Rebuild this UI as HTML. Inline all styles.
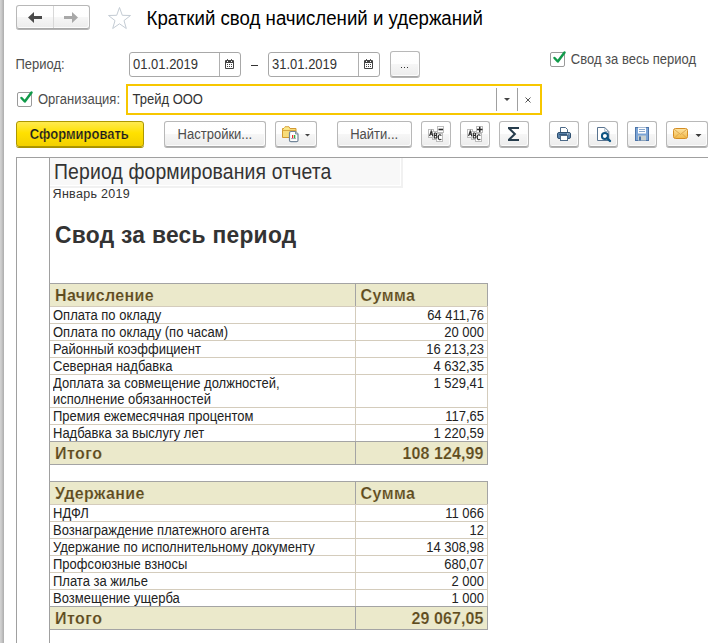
<!DOCTYPE html>
<html><head><meta charset="utf-8"><title>Краткий свод начислений и удержаний</title>
<style>
html,body{margin:0;padding:0;background:#fff;}
body{width:708px;height:643px;position:relative;overflow:hidden;font-family:"Liberation Sans",sans-serif;}
.a{position:absolute;}
.t{position:absolute;white-space:nowrap;font-family:"Liberation Sans",sans-serif;}
.btn{position:absolute;border:1px solid #b8b8b8;border-bottom-color:#a8a8a8;border-radius:3px;background:linear-gradient(#ffffff 0%,#fefefe 50%,#f6f6f6 52%,#ececec 100%);box-shadow:0 1px 0 #b4b4b4,inset -1px -1px 0 #fcfcfc;}
.ybtn{border:1px solid #ad9800;border-radius:3px;background:linear-gradient(#ffea50 0%,#ffe100 45%,#f3d000 100%);box-shadow:0 1px 0 #a89000;}
.fld{position:absolute;border:1px solid #a8a8a8;border-radius:3px;background:#fff;}
.cb{position:absolute;width:13px;height:13px;border:1px solid #9a9a9a;border-radius:2px;background:#fff;}
</style></head><body>
<div class="a" style="left:0px;top:0px;width:4px;height:643px;background:linear-gradient(90deg,#d4d4d4,#c8c8c8 40%,#b4b4b4 80%,#b0b0b0)"></div>
<div class="btn" style="left:16px;top:5px;width:72px;height:22px;"></div>
<div class="a" style="left:53px;top:6px;width:1px;height:22px;background:#d8d8d8"></div>
<svg class="a" style="left:16px;top:5px" width="74" height="24" viewBox="0 0 74 24">
<path d="M12 12.5 L18 7 L18 11 L26 11 L26 14 L18 14 L18 18 Z" fill="#4a4a4a"/>
<path d="M62 12.5 L56 7 L56 11 L48 11 L48 14 L56 14 L56 18 Z" fill="#a8a8a8"/>
</svg>
<svg class="a" style="left:107px;top:6px" width="25" height="24" viewBox="0 0 25 24">
<path d="M12.5 1.5 L15.3 9.3 L23.5 9.5 L17 14.6 L19.3 22.5 L12.5 17.8 L5.7 22.5 L8 14.6 L1.5 9.5 L9.7 9.3 Z" fill="none" stroke="#c4ccd4" stroke-width="1"/>
</svg>
<div class="t" style="left:146.60px;top:9.50px;font-size:18.67px;line-height:18.67px;color:#000;font-weight:normal;letter-spacing:0px;transform:scaleY(1.07);transform-origin:0 15.80px;">Краткий свод начислений и удержаний</div>
<div class="t" style="left:15.50px;top:57.90px;font-size:13px;line-height:13px;color:#4d4d4d;font-weight:normal;letter-spacing:0px;transform:scaleY(1.075);transform-origin:0 11.00px;">Период:</div>
<div class="fld" style="left:129px;top:52px;width:110px;height:23px;"></div>
<div class="a" style="left:219px;top:53px;width:1px;height:23px;background:#b0b0b0"></div>
<div class="t" style="left:133.00px;top:57.90px;font-size:13px;line-height:13px;color:#333;font-weight:normal;letter-spacing:0px;transform:scaleY(1.075);transform-origin:0 11.00px;">01.01.2019</div>
<svg class="a" style="left:225px;top:59px" width="9" height="10" viewBox="0 0 9 10">
<rect x="0" y="1" width="9" height="9" rx="1" fill="#444"/>
<rect x="1" y="4" width="7" height="5" fill="#fff"/>
<rect x="2" y="2" width="1" height="1" fill="#fff"/><rect x="6" y="2" width="1" height="1" fill="#fff"/>
<rect x="2" y="0" width="1" height="1.5" fill="#555"/><rect x="6" y="0" width="1" height="1.5" fill="#555"/>
<rect x="2" y="5" width="1" height="1" fill="#444"/><rect x="4" y="5" width="1" height="1" fill="#444"/><rect x="6" y="5" width="1" height="1" fill="#444"/>
<rect x="2" y="7" width="1" height="1" fill="#444"/><rect x="4" y="7" width="1" height="1" fill="#444"/><rect x="6" y="7" width="1" height="1" fill="#444"/>
</svg>
<div class="a" style="left:251px;top:65px;width:7px;height:1px;background:#333"></div>
<div class="fld" style="left:268px;top:52px;width:110px;height:23px;"></div>
<div class="a" style="left:358px;top:53px;width:1px;height:23px;background:#b0b0b0"></div>
<div class="t" style="left:272.00px;top:57.90px;font-size:13px;line-height:13px;color:#333;font-weight:normal;letter-spacing:0px;transform:scaleY(1.075);transform-origin:0 11.00px;">31.01.2019</div>
<svg class="a" style="left:364px;top:59px" width="9" height="10" viewBox="0 0 9 10">
<rect x="0" y="1" width="9" height="9" rx="1" fill="#444"/>
<rect x="1" y="4" width="7" height="5" fill="#fff"/>
<rect x="2" y="2" width="1" height="1" fill="#fff"/><rect x="6" y="2" width="1" height="1" fill="#fff"/>
<rect x="2" y="0" width="1" height="1.5" fill="#555"/><rect x="6" y="0" width="1" height="1.5" fill="#555"/>
<rect x="2" y="5" width="1" height="1" fill="#444"/><rect x="4" y="5" width="1" height="1" fill="#444"/><rect x="6" y="5" width="1" height="1" fill="#444"/>
<rect x="2" y="7" width="1" height="1" fill="#444"/><rect x="4" y="7" width="1" height="1" fill="#444"/><rect x="6" y="7" width="1" height="1" fill="#444"/>
</svg>
<div class="btn" style="left:390px;top:51px;width:28px;height:24px;"></div>
<div class="a" style="left:401px;top:67px;width:1px;height:1px;background:#333"></div>
<div class="a" style="left:404px;top:67px;width:1px;height:1px;background:#333"></div>
<div class="a" style="left:407px;top:67px;width:1px;height:1px;background:#333"></div>
<div class="cb" style="left:550px;top:52px;"></div>
<svg class="a" style="left:550px;top:50px" width="18" height="18" viewBox="0 0 18 18">
<path d="M4.5 8 L7.8 11.5 L14.5 2.5" fill="none" stroke="#119a4a" stroke-width="2.5" stroke-linecap="round" stroke-linejoin="round"/>
</svg>
<div class="t" style="left:570.80px;top:53.20px;font-size:13px;line-height:13px;color:#4d4d4d;font-weight:normal;letter-spacing:0px;transform:scaleY(1.075);transform-origin:0 11.00px;">Свод за весь период</div>
<div class="cb" style="left:17px;top:92px;"></div>
<svg class="a" style="left:17px;top:90px" width="18" height="18" viewBox="0 0 18 18">
<path d="M4.5 8 L7.8 11.5 L14.5 2.5" fill="none" stroke="#119a4a" stroke-width="2.5" stroke-linecap="round" stroke-linejoin="round"/>
</svg>
<div class="t" style="left:38.00px;top:93.20px;font-size:13px;line-height:13px;color:#4d4d4d;font-weight:normal;letter-spacing:0px;transform:scaleY(1.075);transform-origin:0 11.00px;">Организация:</div>
<div class="a" style="left:126px;top:84px;width:412px;height:27px;border:2px solid #f7c700;background:#fff"></div>
<div class="t" style="left:132.50px;top:92.70px;font-size:13px;line-height:13px;color:#333;font-weight:normal;letter-spacing:0px;transform:scaleY(1.075);transform-origin:0 11.00px;">Трейд ООО</div>
<div class="a" style="left:496px;top:88px;width:1px;height:23px;background:#a0a0a0"></div>
<div class="a" style="left:517px;top:88px;width:1px;height:23px;background:#a0a0a0"></div>
<svg class="a" style="left:503px;top:97px" width="8" height="5" viewBox="0 0 8 5"><path d="M1 1 L7 1 L4 4 Z" fill="#444"/></svg>
<svg class="a" style="left:524px;top:96px" width="8" height="8" viewBox="0 0 8 8"><path d="M1.5 1.5 L6.5 6.5 M6.5 1.5 L1.5 6.5" stroke="#555" stroke-width="1"/></svg>
<div class="a ybtn" style="left:16px;top:121px;width:126px;height:24px;"></div>
<div class="t" style="left:29.80px;top:127.50px;font-size:13px;line-height:13px;color:#1a1a1a;font-weight:bold;letter-spacing:0px;transform:scaleY(1.075);transform-origin:0 11.00px;-webkit-text-stroke:0.2px #fde02a;">Сформировать</div>
<div class="btn" style="left:164px;top:121px;width:100px;height:24px;"></div>
<div class="t" style="left:177.60px;top:127.60px;font-size:13px;line-height:13px;color:#4d4d4d;font-weight:normal;letter-spacing:0px;transform:scaleY(1.075);transform-origin:0 11.00px;">Настройки...</div>
<div class="btn" style="left:275px;top:121px;width:40px;height:24px;"></div>
<div class="btn" style="left:337px;top:121px;width:73px;height:24px;"></div>
<div class="t" style="left:350.20px;top:127.60px;font-size:13px;line-height:13px;color:#4d4d4d;font-weight:normal;letter-spacing:0px;transform:scaleY(1.075);transform-origin:0 11.00px;">Найти...</div>
<div class="btn" style="left:421px;top:121px;width:28px;height:24px;"></div>
<div class="btn" style="left:460px;top:121px;width:28px;height:24px;"></div>
<div class="btn" style="left:499px;top:121px;width:28px;height:24px;"></div>
<div class="btn" style="left:549px;top:121px;width:28px;height:24px;"></div>
<div class="btn" style="left:588px;top:121px;width:28px;height:24px;"></div>
<div class="btn" style="left:627px;top:121px;width:28px;height:24px;"></div>
<div class="btn" style="left:666px;top:121px;width:40px;height:24px;"></div>
<svg class="a" style="left:281px;top:125px" width="32" height="18" viewBox="0 0 32 18">
<path d="M1.5 12.5 L1.5 3.5 L3 3.5 L4 1.8 L8 1.8 L9 3.5 L15 3.5 L15 12.5 Z" fill="#f7dc7a" stroke="#d39a32" stroke-width="1"/>
<path d="M1.5 5.5 L15 5.5" stroke="#d8a840" stroke-width="1"/>
<rect x="3" y="2.5" width="5" height="2" fill="#fbe98a"/>
<path d="M8.5 8 Q8.5 6.5 10 6.5 L14.5 6.5 L17 9 L17 15.2 Q17 16.7 15.5 16.7 L10 16.7 Q8.5 16.7 8.5 15.2 Z" fill="#fff" stroke="#74879a" stroke-width="1.2"/>
<path d="M14.5 6.5 L14.5 9 L17 9" fill="#c8d0d8" stroke="#74879a" stroke-width="0.8"/>
<rect x="11" y="10" width="1.3" height="3.3" fill="#e83030"/><rect x="13" y="10" width="1.3" height="3.3" fill="#30b040"/>
<path d="M10 13.6 L15 13.6" stroke="#8a8aa0" stroke-width="0.7"/>
<path d="M24 9 L29 9 L26.5 11.5 Z" fill="#444"/>
</svg>
<svg class="a" style="left:422px;top:125px" width="26" height="18" viewBox="0 0 26 18">
<rect x="15.5" y="1.5" width="6" height="6" fill="#fff" stroke="#bcbcbc"/>
<path d="M16.5 4.5 L21 4.5" stroke="#2a2a2a" stroke-width="1.6"/>
<rect x="6.5" y="4.5" width="5" height="8" fill="#fff" stroke="#bcbcbc"/>
<rect x="10.5" y="6.5" width="5" height="8" fill="#fff" stroke="#bcbcbc"/>
<rect x="14.5" y="8.5" width="6" height="8" fill="#fff" stroke="#bcbcbc"/>
<path d="M7.6 11 L9.2 6 L10.8 11 M8.2 9.3 L10.2 9.3" fill="none" stroke="#2a2a2a" stroke-width="1.1"/>
<path d="M12.3 8 L12.3 13 L13.8 13 Q15 13 15 11.7 Q15 10.4 13.7 10.4 L12.3 10.4 M12.3 8 L13.6 8 Q14.7 8 14.7 9.2 Q14.7 10.4 13.7 10.4" fill="none" stroke="#2a2a2a" stroke-width="1.1"/>
<path d="M19.3 10.6 Q18.8 9.8 17.8 9.8 Q16.3 9.8 16.3 12.3 Q16.3 14.8 17.8 14.8 Q18.8 14.8 19.3 14" fill="none" stroke="#2a2a2a" stroke-width="1.1"/>
</svg>
<svg class="a" style="left:461px;top:125px" width="26" height="18" viewBox="0 0 26 18">
<rect x="15.5" y="1.5" width="6" height="6" fill="#fff" stroke="#bcbcbc"/>
<path d="M16 4.5 L21.5 4.5 M18.75 1.8 L18.75 7.2" stroke="#2a2a2a" stroke-width="1.5"/>
<rect x="6.5" y="4.5" width="5" height="8" fill="#fff" stroke="#bcbcbc"/>
<rect x="10.5" y="6.5" width="5" height="8" fill="#fff" stroke="#bcbcbc"/>
<rect x="14.5" y="8.5" width="6" height="8" fill="#fff" stroke="#bcbcbc"/>
<path d="M7.6 11 L9.2 6 L10.8 11 M8.2 9.3 L10.2 9.3" fill="none" stroke="#2a2a2a" stroke-width="1.1"/>
<path d="M12.3 8 L12.3 13 L13.8 13 Q15 13 15 11.7 Q15 10.4 13.7 10.4 L12.3 10.4 M12.3 8 L13.6 8 Q14.7 8 14.7 9.2 Q14.7 10.4 13.7 10.4" fill="none" stroke="#2a2a2a" stroke-width="1.1"/>
<path d="M19.3 10.6 Q18.8 9.8 17.8 9.8 Q16.3 9.8 16.3 12.3 Q16.3 14.8 17.8 14.8 Q18.8 14.8 19.3 14" fill="none" stroke="#2a2a2a" stroke-width="1.1"/>
</svg>
<svg class="a" style="left:506px;top:126px" width="15" height="16" viewBox="0 0 15 16">
<path d="M2 1 L13 1 L13 3 L5.2 3 L10.3 8 L5.2 13 L13 13 L13 15 L2 15 L2 13.2 L7.4 8 L2 2.8 Z" fill="#263c4c"/>
</svg>
<svg class="a" style="left:556px;top:126px" width="16" height="16" viewBox="0 0 16 16">
<path d="M4.5 1.5 L9.5 1.5 L11.5 3.5 L11.5 7 L4.5 7 Z" fill="#fff" stroke="#4d6a88" stroke-width="1"/>
<rect x="1.5" y="6.5" width="13" height="6" rx="1.5" fill="#5a82aa" stroke="#2f5070"/>
<rect x="3" y="8" width="10" height="1" fill="#35597d"/>
<rect x="11" y="7.5" width="1" height="1" fill="#fff"/><rect x="12.5" y="7.5" width="1" height="1" fill="#fff"/>
<rect x="4.5" y="9.5" width="7" height="5" fill="#fff" stroke="#4d6a88"/>
</svg>
<svg class="a" style="left:596px;top:126px" width="16" height="17" viewBox="0 0 16 17">
<path d="M1.5 1.5 L8.8 1.5 L12.8 5.5 L12.8 14.5 L1.5 14.5 Z" fill="#fff" stroke="#5a7490" stroke-width="1"/>
<path d="M8.8 1.5 L8.8 5.5 L12.8 5.5" fill="none" stroke="#8aa0b4" stroke-width="0.8"/>
<circle cx="8.9" cy="9.9" r="3" fill="#fff" stroke="#0d5482" stroke-width="2"/>
<path d="M11 12 L14 15" stroke="#0d5482" stroke-width="2.4" stroke-linecap="round"/>
</svg>
<svg class="a" style="left:634px;top:126px" width="16" height="16" viewBox="0 0 16 16">
<rect x="1.5" y="1.5" width="13" height="13" fill="#7ba4d6" stroke="#4c74a8"/>
<rect x="4" y="1.5" width="8" height="6" fill="#fff"/>
<rect x="5" y="3" width="6" height="1" fill="#8aa8cc"/><rect x="5" y="5" width="6" height="1" fill="#8aa8cc"/>
<rect x="4" y="9.5" width="8" height="5" fill="#c8d0d0"/>
<rect x="5" y="10.5" width="2" height="4" fill="#4c74a8"/>
</svg>
<svg class="a" style="left:672px;top:127px" width="32" height="14" viewBox="0 0 32 14">
<defs><linearGradient id="env" x1="0" y1="0" x2="0" y2="1"><stop offset="0" stop-color="#fde4a4"/><stop offset="1" stop-color="#f2b844"/></linearGradient></defs>
<rect x="1.5" y="1.5" width="14" height="10" rx="2" fill="url(#env)" stroke="#d48c22"/>
<path d="M2.5 2.5 L8.5 7.5 L14.5 2.5 M2.5 11 L6.5 7 M14.5 11 L10.5 7" fill="none" stroke="#d9a048" stroke-width="0.9"/>
<path d="M23.5 7 L29.5 7 L26.5 10 Z" fill="#3a3a3a"/>
</svg>
<div class="a" style="left:16px;top:157px;width:692px;height:1px;background:#a0a0a0"></div>
<div class="a" style="left:16px;top:157px;width:1px;height:486px;background:#a0a0a0"></div>
<div class="a" style="left:49px;top:158px;width:1px;height:485px;background:#a0a0a0"></div>
<div class="a" style="left:50px;top:158px;width:350px;height:27px;background:#f8f8f8"></div>
<div class="a" style="left:401px;top:158px;width:2px;height:30px;background:#f1f1f1"></div>
<div class="a" style="left:50px;top:186px;width:353px;height:2px;background:#f1f1f1"></div>
<div class="t" style="left:54.00px;top:162.98px;font-size:19.4px;line-height:19.4px;color:#333;font-weight:normal;letter-spacing:0.14px;transform:scaleY(1.1);transform-origin:0 16.42px;">Период формирования отчета</div>
<div class="t" style="left:52.60px;top:187.52px;font-size:12.5px;line-height:12.5px;color:#333;font-weight:normal;letter-spacing:0.3px;">Январь 2019</div>
<div class="t" style="left:55.00px;top:223.60px;font-size:22.8px;line-height:22.8px;color:#333;font-weight:bold;letter-spacing:0.28px;transform:scaleY(1.05);transform-origin:0 19.30px;">Свод за весь период</div>
<div class="a" style="left:49px;top:283px;width:439px;height:1px;background:#a4a4a4"></div>
<div class="a" style="left:50px;top:284px;width:437px;height:22px;background:#ebe9cb"></div>
<div class="a" style="left:355px;top:284px;width:1px;height:22px;background:#a4a4a4"></div>
<div class="a" style="left:487px;top:284px;width:1px;height:22px;background:#a4a4a4"></div>
<div class="t" style="left:55.00px;top:288.46px;font-size:16px;line-height:16px;color:#5e4b1f;font-weight:bold;letter-spacing:0.37px;-webkit-text-stroke:0.15px #ebe9cb;">Начисление</div>
<div class="t" style="left:360.50px;top:288.46px;font-size:16px;line-height:16px;color:#5e4b1f;font-weight:bold;letter-spacing:0.45px;-webkit-text-stroke:0.15px #ebe9cb;">Сумма</div>
<div class="a" style="left:50px;top:306px;width:438px;height:1px;background:#d4ccbc"></div>
<div class="a" style="left:355px;top:307px;width:1px;height:16px;background:#d4ccbc"></div>
<div class="a" style="left:487px;top:307px;width:1px;height:16px;background:#d4ccbc"></div>
<div class="t" style="left:53.00px;top:309.00px;font-size:13px;line-height:13px;color:#222;font-weight:normal;letter-spacing:0px;transform:scaleY(1.075);transform-origin:0 11.00px;">Оплата по окладу</div>
<div class="t" style="right:224px;top:309.00px;font-size:13px;line-height:13px;color:#222;transform:scaleY(1.075);transform-origin:0 11px">64 411,76</div>
<div class="a" style="left:50px;top:323px;width:438px;height:1px;background:#d4ccbc"></div>
<div class="a" style="left:355px;top:324px;width:1px;height:16px;background:#d4ccbc"></div>
<div class="a" style="left:487px;top:324px;width:1px;height:16px;background:#d4ccbc"></div>
<div class="t" style="left:53.00px;top:326.00px;font-size:13px;line-height:13px;color:#222;font-weight:normal;letter-spacing:0px;transform:scaleY(1.075);transform-origin:0 11.00px;">Оплата по окладу (по часам)</div>
<div class="t" style="right:224px;top:326.00px;font-size:13px;line-height:13px;color:#222;transform:scaleY(1.075);transform-origin:0 11px">20 000</div>
<div class="a" style="left:50px;top:340px;width:438px;height:1px;background:#d4ccbc"></div>
<div class="a" style="left:355px;top:341px;width:1px;height:16px;background:#d4ccbc"></div>
<div class="a" style="left:487px;top:341px;width:1px;height:16px;background:#d4ccbc"></div>
<div class="t" style="left:53.00px;top:343.00px;font-size:13px;line-height:13px;color:#222;font-weight:normal;letter-spacing:0px;transform:scaleY(1.075);transform-origin:0 11.00px;">Районный коэффициент</div>
<div class="t" style="right:224px;top:343.00px;font-size:13px;line-height:13px;color:#222;transform:scaleY(1.075);transform-origin:0 11px">16 213,23</div>
<div class="a" style="left:50px;top:357px;width:438px;height:1px;background:#d4ccbc"></div>
<div class="a" style="left:355px;top:358px;width:1px;height:16px;background:#d4ccbc"></div>
<div class="a" style="left:487px;top:358px;width:1px;height:16px;background:#d4ccbc"></div>
<div class="t" style="left:53.00px;top:360.00px;font-size:13px;line-height:13px;color:#222;font-weight:normal;letter-spacing:0px;transform:scaleY(1.075);transform-origin:0 11.00px;">Северная надбавка</div>
<div class="t" style="right:224px;top:360.00px;font-size:13px;line-height:13px;color:#222;transform:scaleY(1.075);transform-origin:0 11px">4 632,35</div>
<div class="a" style="left:50px;top:374px;width:438px;height:1px;background:#d4ccbc"></div>
<div class="a" style="left:355px;top:375px;width:1px;height:32px;background:#d4ccbc"></div>
<div class="a" style="left:487px;top:375px;width:1px;height:32px;background:#d4ccbc"></div>
<div class="t" style="left:53.00px;top:377.00px;font-size:13px;line-height:13px;color:#222;font-weight:normal;letter-spacing:0px;transform:scaleY(1.075);transform-origin:0 11.00px;">Доплата за совмещение должностей,</div>
<div class="t" style="left:53.00px;top:393.00px;font-size:13px;line-height:13px;color:#222;font-weight:normal;letter-spacing:0px;transform:scaleY(1.075);transform-origin:0 11.00px;">исполнение обязанностей</div>
<div class="t" style="right:224px;top:377.00px;font-size:13px;line-height:13px;color:#222;transform:scaleY(1.075);transform-origin:0 11px">1 529,41</div>
<div class="a" style="left:50px;top:407px;width:438px;height:1px;background:#d4ccbc"></div>
<div class="a" style="left:355px;top:408px;width:1px;height:16px;background:#d4ccbc"></div>
<div class="a" style="left:487px;top:408px;width:1px;height:16px;background:#d4ccbc"></div>
<div class="t" style="left:53.00px;top:410.00px;font-size:13px;line-height:13px;color:#222;font-weight:normal;letter-spacing:0px;transform:scaleY(1.075);transform-origin:0 11.00px;">Премия ежемесячная процентом</div>
<div class="t" style="right:224px;top:410.00px;font-size:13px;line-height:13px;color:#222;transform:scaleY(1.075);transform-origin:0 11px">117,65</div>
<div class="a" style="left:50px;top:424px;width:438px;height:1px;background:#d4ccbc"></div>
<div class="a" style="left:355px;top:425px;width:1px;height:16px;background:#d4ccbc"></div>
<div class="a" style="left:487px;top:425px;width:1px;height:16px;background:#d4ccbc"></div>
<div class="t" style="left:53.00px;top:427.00px;font-size:13px;line-height:13px;color:#222;font-weight:normal;letter-spacing:0px;transform:scaleY(1.075);transform-origin:0 11.00px;">Надбавка за выслугу лет</div>
<div class="t" style="right:224px;top:427.00px;font-size:13px;line-height:13px;color:#222;transform:scaleY(1.075);transform-origin:0 11px">1 220,59</div>
<div class="a" style="left:49px;top:441px;width:439px;height:1px;background:#a4a4a4"></div>
<div class="a" style="left:50px;top:442px;width:437px;height:22px;background:#ebe9cb"></div>
<div class="a" style="left:355px;top:442px;width:1px;height:22px;background:#a4a4a4"></div>
<div class="a" style="left:487px;top:442px;width:1px;height:22px;background:#a4a4a4"></div>
<div class="t" style="left:55.00px;top:446.46px;font-size:16px;line-height:16px;color:#5e4b1f;font-weight:bold;letter-spacing:0.45px;-webkit-text-stroke:0.15px #ebe9cb;">Итого</div>
<div class="t" style="right:224.5px;top:446.46px;font-size:16px;line-height:16px;color:#5e4b1f;font-weight:bold;letter-spacing:0.1px;-webkit-text-stroke:0.15px #ebe9cb;">108 124,99</div>
<div class="a" style="left:49px;top:464px;width:439px;height:1px;background:#a4a4a4"></div>
<div class="a" style="left:49px;top:481px;width:439px;height:1px;background:#a4a4a4"></div>
<div class="a" style="left:50px;top:482px;width:437px;height:22px;background:#ebe9cb"></div>
<div class="a" style="left:355px;top:482px;width:1px;height:22px;background:#a4a4a4"></div>
<div class="a" style="left:487px;top:482px;width:1px;height:22px;background:#a4a4a4"></div>
<div class="t" style="left:55.00px;top:486.46px;font-size:16px;line-height:16px;color:#5e4b1f;font-weight:bold;letter-spacing:0.37px;-webkit-text-stroke:0.15px #ebe9cb;">Удержание</div>
<div class="t" style="left:360.50px;top:486.46px;font-size:16px;line-height:16px;color:#5e4b1f;font-weight:bold;letter-spacing:0.45px;-webkit-text-stroke:0.15px #ebe9cb;">Сумма</div>
<div class="a" style="left:50px;top:504px;width:438px;height:1px;background:#d4ccbc"></div>
<div class="a" style="left:355px;top:505px;width:1px;height:16px;background:#d4ccbc"></div>
<div class="a" style="left:487px;top:505px;width:1px;height:16px;background:#d4ccbc"></div>
<div class="t" style="left:53.00px;top:507.00px;font-size:13px;line-height:13px;color:#222;font-weight:normal;letter-spacing:0px;transform:scaleY(1.075);transform-origin:0 11.00px;">НДФЛ</div>
<div class="t" style="right:224px;top:507.00px;font-size:13px;line-height:13px;color:#222;transform:scaleY(1.075);transform-origin:0 11px">11 066</div>
<div class="a" style="left:50px;top:521px;width:438px;height:1px;background:#d4ccbc"></div>
<div class="a" style="left:355px;top:522px;width:1px;height:16px;background:#d4ccbc"></div>
<div class="a" style="left:487px;top:522px;width:1px;height:16px;background:#d4ccbc"></div>
<div class="t" style="left:53.00px;top:524.00px;font-size:13px;line-height:13px;color:#222;font-weight:normal;letter-spacing:0px;transform:scaleY(1.075);transform-origin:0 11.00px;">Вознаграждение платежного агента</div>
<div class="t" style="right:224px;top:524.00px;font-size:13px;line-height:13px;color:#222;transform:scaleY(1.075);transform-origin:0 11px">12</div>
<div class="a" style="left:50px;top:538px;width:438px;height:1px;background:#d4ccbc"></div>
<div class="a" style="left:355px;top:539px;width:1px;height:16px;background:#d4ccbc"></div>
<div class="a" style="left:487px;top:539px;width:1px;height:16px;background:#d4ccbc"></div>
<div class="t" style="left:53.00px;top:541.00px;font-size:13px;line-height:13px;color:#222;font-weight:normal;letter-spacing:0px;transform:scaleY(1.075);transform-origin:0 11.00px;">Удержание по исполнительному документу</div>
<div class="t" style="right:224px;top:541.00px;font-size:13px;line-height:13px;color:#222;transform:scaleY(1.075);transform-origin:0 11px">14 308,98</div>
<div class="a" style="left:50px;top:555px;width:438px;height:1px;background:#d4ccbc"></div>
<div class="a" style="left:355px;top:556px;width:1px;height:16px;background:#d4ccbc"></div>
<div class="a" style="left:487px;top:556px;width:1px;height:16px;background:#d4ccbc"></div>
<div class="t" style="left:53.00px;top:558.00px;font-size:13px;line-height:13px;color:#222;font-weight:normal;letter-spacing:0px;transform:scaleY(1.075);transform-origin:0 11.00px;">Профсоюзные взносы</div>
<div class="t" style="right:224px;top:558.00px;font-size:13px;line-height:13px;color:#222;transform:scaleY(1.075);transform-origin:0 11px">680,07</div>
<div class="a" style="left:50px;top:572px;width:438px;height:1px;background:#d4ccbc"></div>
<div class="a" style="left:355px;top:573px;width:1px;height:16px;background:#d4ccbc"></div>
<div class="a" style="left:487px;top:573px;width:1px;height:16px;background:#d4ccbc"></div>
<div class="t" style="left:53.00px;top:575.00px;font-size:13px;line-height:13px;color:#222;font-weight:normal;letter-spacing:0px;transform:scaleY(1.075);transform-origin:0 11.00px;">Плата за жилье</div>
<div class="t" style="right:224px;top:575.00px;font-size:13px;line-height:13px;color:#222;transform:scaleY(1.075);transform-origin:0 11px">2 000</div>
<div class="a" style="left:50px;top:589px;width:438px;height:1px;background:#d4ccbc"></div>
<div class="a" style="left:355px;top:590px;width:1px;height:16px;background:#d4ccbc"></div>
<div class="a" style="left:487px;top:590px;width:1px;height:16px;background:#d4ccbc"></div>
<div class="t" style="left:53.00px;top:592.00px;font-size:13px;line-height:13px;color:#222;font-weight:normal;letter-spacing:0px;transform:scaleY(1.075);transform-origin:0 11.00px;">Возмещение ущерба</div>
<div class="t" style="right:224px;top:592.00px;font-size:13px;line-height:13px;color:#222;transform:scaleY(1.075);transform-origin:0 11px">1 000</div>
<div class="a" style="left:49px;top:606px;width:439px;height:1px;background:#a4a4a4"></div>
<div class="a" style="left:50px;top:607px;width:437px;height:22px;background:#ebe9cb"></div>
<div class="a" style="left:355px;top:607px;width:1px;height:22px;background:#a4a4a4"></div>
<div class="a" style="left:487px;top:607px;width:1px;height:22px;background:#a4a4a4"></div>
<div class="t" style="left:55.00px;top:611.46px;font-size:16px;line-height:16px;color:#5e4b1f;font-weight:bold;letter-spacing:0.45px;-webkit-text-stroke:0.15px #ebe9cb;">Итого</div>
<div class="t" style="right:224.5px;top:611.46px;font-size:16px;line-height:16px;color:#5e4b1f;font-weight:bold;letter-spacing:0.1px;-webkit-text-stroke:0.15px #ebe9cb;">29 067,05</div>
<div class="a" style="left:49px;top:629px;width:439px;height:1px;background:#a4a4a4"></div>
</body></html>
